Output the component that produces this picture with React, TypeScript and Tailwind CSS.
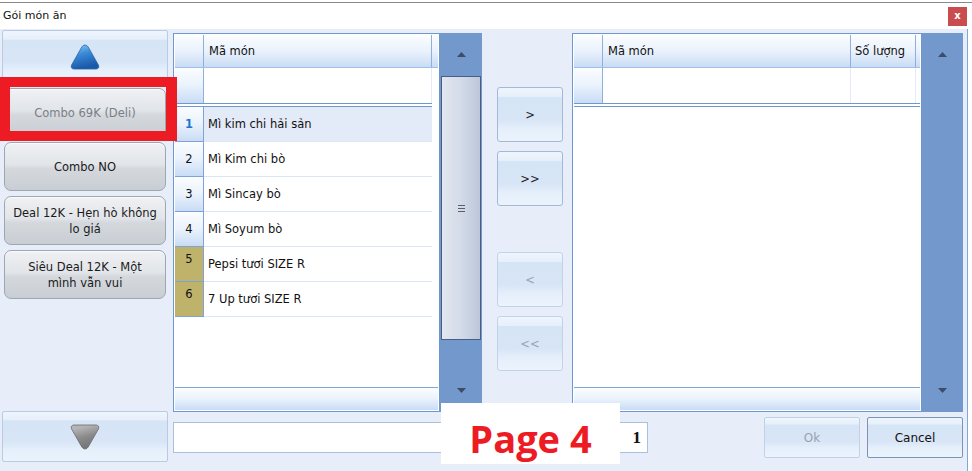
import React from "react";

const blueBtn =
  "bg-[linear-gradient(to_bottom,#eef5fd_0%,#e6effb_16%,#d6e5f5_18%,#d7e5f6_60%,#e5effb_76%,#ebf3fc_100%)]";
const greyBtn =
  "bg-[linear-gradient(to_bottom,#eff1f3_0%,#e2e5e9_45%,#d4d8dd_55%,#c9ced4_100%)]";
const headCell = "bg-linear-to-b from-[#fbfdff] via-[#eaf2fc] to-[#c9dcf5]";

const items = [
  { no: 1, name: "Mì kim chi hải sản", active: true },
  { no: 2, name: "Mì Kim chi bò" },
  { no: 3, name: "Mì Sincay bò" },
  { no: 4, name: "Mì Soyum bò" },
  { no: 5, name: "Pepsi tươi SIZE R", combo: true },
  { no: 6, name: "7 Up tươi SIZE R", combo: true },
];

const combos = [
  { lines: ["Combo 69K (Deli)"], selected: true },
  { lines: ["Combo NO"] },
  { lines: ["Deal 12K - Hẹn hò không", "lo giá"] },
  { lines: ["Siêu Deal 12K - Một", "mình vẫn vui"] },
];

function ArrowUp() {
  return (
    <svg width="9" height="5" viewBox="0 0 9 5">
      <path d="M4.5 0 L9 5 L0 5 Z" fill="#3d4c68" />
    </svg>
  );
}

function ArrowDown() {
  return (
    <svg width="9" height="5" viewBox="0 0 9 5">
      <path d="M0 0 L9 0 L4.5 5 Z" fill="#3d4c68" />
    </svg>
  );
}

function BigTriangle({ down }: { down?: boolean }) {
  const id = down ? "tri-grey" : "tri-blue";
  return (
    <svg width="32" height="28" viewBox="0 0 32 28" className={down ? "rotate-180" : ""}>
      <defs>
        <linearGradient id={id} x1="0" y1="0" x2="0.3" y2="1">
          {down ? (
            <>
              <stop offset="0" stopColor="#6c6c6c" />
              <stop offset="0.6" stopColor="#8a8a8a" />
              <stop offset="1" stopColor="#b4b4b4" />
            </>
          ) : (
            <>
              <stop offset="0" stopColor="#8ccbf7" />
              <stop offset="0.45" stopColor="#3a8ad8" />
              <stop offset="1" stopColor="#1a58a8" />
            </>
          )}
        </linearGradient>
      </defs>
      <path
        d="M16 2 Q14 2 12.8 4 L2.6 22 Q1.2 25.5 4.8 26 L27.2 26 Q30.8 25.5 29.4 22 L19.2 4 Q18 2 16 2 Z"
        fill={`url(#${id})`}
        stroke={down ? "#6a6a6a" : "#2a64a8"}
        strokeWidth="0.8"
      />
    </svg>
  );
}

function Scrollbar({ thumb }: { thumb?: boolean }) {
  return (
    <div className="flex h-full flex-col bg-[#7398cc]">
      <div className="flex h-[43px] items-center justify-center">
        <ArrowUp />
      </div>
      {thumb ? (
        <div className="mx-px flex h-[264px] items-center justify-center border border-[#4a5e82] bg-linear-to-r from-[#e2e7f0] via-[#d3dbe8] to-[#bcc7da]">
          <div className="flex flex-col gap-[2px]">
            <div className="h-px w-[7px] bg-[#5a5f6a]" />
            <div className="h-px w-[7px] bg-[#5a5f6a]" />
            <div className="h-px w-[7px] bg-[#5a5f6a]" />
          </div>
        </div>
      ) : null}
      <div className="flex-1" />
      <div className="flex h-[43px] items-center justify-center">
        <ArrowDown />
      </div>
    </div>
  );
}

function ItemGrid() {
  return (
    <div className="flex h-full w-[267px] flex-col border border-[#6d98d2] bg-white p-px">
      <div className="flex h-[33px] border-b border-[#a2bfe6]">
        <div className={`w-[29px] border-r border-[#8fb0dd] ${headCell}`} />
        <div className={`flex w-[228px] items-center border-r border-[#8fb0dd] pl-[5px] ${headCell}`}>
          Mã món
        </div>
        <div className={`flex-1 ${headCell}`} />
      </div>
      <div className="flex h-[35px]">
        <div className={`w-[29px] border-r border-[#8fb0dd] ${headCell}`} />
        <div className="w-[228px] border-r border-[#e3ebf6]" />
      </div>
      <div className="h-[4px] w-[257px] border-y border-[#6d98d2]" />
      {items.map((it) => (
        <div key={it.no} className="flex h-[35px] w-[257px]">
          <div
            className={`w-[29px] border-r border-b border-[#7ea3d6] ${
              it.combo
                ? "flex justify-center bg-[#bfb36c] pt-[4px]"
                : `flex items-center justify-center ${headCell}`
            } ${it.active ? "font-bold text-[#1f76d2]" : ""}`}
          >
            {it.no}
          </div>
          <div
            className={`flex flex-1 items-center border-b border-[#dde7f4] pl-[4px] ${
              it.active ? "bg-[#e3ebf8]" : ""
            }`}
          >
            {it.name}
          </div>
        </div>
      ))}
      <div className="flex-1" />
      <div className={`h-[23px] border-t border-[#7ea3d6] ${headCell}`} />
    </div>
  );
}

function PickedGrid() {
  return (
    <div className="flex h-full w-[350px] flex-col border border-[#6d98d2] bg-white p-px">
      <div className="flex h-[33px] border-b border-[#a2bfe6]">
        <div className={`w-[29px] border-r border-[#8fb0dd] ${headCell}`} />
        <div className={`flex w-[248px] items-center border-r border-[#8fb0dd] pl-[5px] ${headCell}`}>
          Mã món
        </div>
        <div className={`flex w-[65px] items-center border-r border-[#8fb0dd] pl-[4px] ${headCell}`}>
          Số lượng
        </div>
        <div className={`flex-1 ${headCell}`} />
      </div>
      <div className="flex h-[35px]">
        <div className={`w-[29px] border-r border-[#8fb0dd] ${headCell}`} />
        <div className="w-[248px] border-r border-[#e3ebf6]" />
        <div className="w-[65px] border-r border-[#e3ebf6]" />
      </div>
      <div className="h-[4px] border-y border-[#6d98d2]" />
      <div className="flex-1" />
      <div className={`h-[23px] border-t border-[#7ea3d6] ${headCell}`} />
    </div>
  );
}

function MoveButton({ label, disabled }: { label: string; disabled?: boolean }) {
  return (
    <div
      className={`flex h-[55px] w-[66px] items-center justify-center rounded-[3px] border ${blueBtn} ${
        disabled ? "border-[#c3d2e6] text-[#9aa3ae]" : "border-[#a3b9d8] text-[#222]"
      }`}
    >
      {label}
    </div>
  );
}

export default function App() {
  return (
    <div className="relative h-[471px] w-[972px] overflow-hidden bg-white font-['DejaVu_Sans','Liberation_Sans',sans-serif] text-[11.5px] leading-[16px] text-[#111]">
      <div className="pt-[2px]">
        <div className="flex h-[27px] items-center justify-between border-t border-[#8a8a8a] pr-[5px] pl-[3px]">
          <span className="text-[11px]">Gói món ăn</span>
          <div className="flex h-[19px] w-[19px] items-center justify-center bg-[#c94c4f] text-[10px] font-bold leading-none text-white">
            x
          </div>
        </div>
      </div>

      <div className="flex h-[442px] w-[968px] border-r border-[#86a6d6] bg-[#e7eefa]">
        <div className="flex w-[170px] flex-col pt-px">
          <div
            className={`mx-[2px] flex h-[53px] items-start justify-center rounded-[2px] border border-[#b8cbe3] pt-[12px] ${blueBtn}`}
          >
            <BigTriangle />
          </div>
          <div className="mt-[5px] flex flex-col gap-[5px] pl-[4px]">
            {combos.map((c) => (
              <div
                key={c.lines[0]}
                className={`flex h-[49px] w-[162px] flex-col items-center justify-center rounded-[7px] border border-[#9ea6b0] text-center shadow-[inset_0_1px_0_#fafbfc] ${greyBtn} ${
                  c.selected ? "text-[#7a7f86]" : "text-[#1a1a1a]"
                }`}
              >
                {c.lines.map((l) => (
                  <span key={l}>{l}</span>
                ))}
              </div>
            ))}
          </div>
          <div className="flex-1" />
          <div
            className={`mx-[2px] mb-[9px] flex h-[51px] items-start justify-center rounded-[2px] border border-[#b8cbe3] pt-[11px] ${blueBtn}`}
          >
            <BigTriangle down />
          </div>
        </div>

        <div className="flex flex-1 flex-col pt-[4px]">
          <div className="ml-[3px] flex h-[379px]">
            <ItemGrid />
            <div className="w-[42px]">
              <Scrollbar thumb />
            </div>
            <div className="flex w-[90px] flex-col pt-[54px] pl-[15px]">
              <MoveButton label=">" />
              <div className="mt-[9px]">
                <MoveButton label=">>" />
              </div>
              <div className="mt-[46px]">
                <MoveButton label="<" disabled />
              </div>
              <div className="mt-[9px]">
                <MoveButton label="<<" disabled />
              </div>
            </div>
            <PickedGrid />
            <div className="w-[41px]">
              <Scrollbar />
            </div>
          </div>

          <div className="mt-[5px] flex h-[41px] items-center pr-[4px]">
            <div className="ml-[3px] flex h-[31px] w-[475px] items-center justify-end border border-[#a9c0de] bg-white pr-[6px] font-['Liberation_Serif',serif] text-[17px] font-bold">
              1
            </div>
            <div className="flex-1" />
            <div
              className={`flex h-[41px] w-[96px] items-center justify-center rounded-[2px] border border-[#c2d2e6] text-[12px] text-[#9aa2ad] ${blueBtn}`}
            >
              Ok
            </div>
            <div
              className={`ml-[7px] flex h-[41px] w-[96px] items-center justify-center rounded-[2px] border border-[#7d93b4] text-[12px] text-[#111] ${blueBtn}`}
            >
              Cancel
            </div>
          </div>
        </div>
      </div>

      <div className="pointer-events-none absolute top-[77px] left-0 h-[64px] w-[177px] border-[10px] border-r-[11px] border-[#ed1c24]" />

      <div className="absolute top-[403px] left-[441px] flex h-[61px] w-[179px] items-center justify-center bg-white pt-[8px] font-['Open_Sans',sans-serif] text-[38px] leading-none font-bold text-[#ed1c24]">
        Page 4
      </div>
    </div>
  );
}
